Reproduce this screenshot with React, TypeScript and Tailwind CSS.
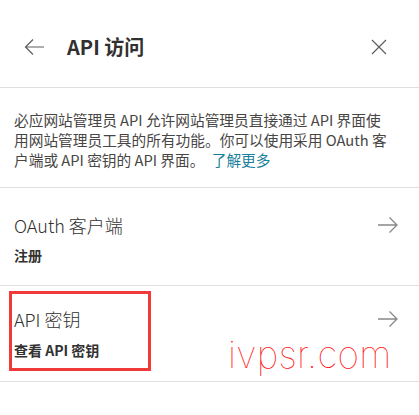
import React from 'react';

const font = { fontFamily: '"Noto Sans CJK SC", "Open Sans", sans-serif' };

function ArrowRight() {
  return (
    <svg width="22" height="20" viewBox="0 0 22 20" fill="none" className="text-[#8a8886]">
      <path d="M1 10H20M12.5 2.5L20 10L12.5 17.5" stroke="currentColor" strokeWidth="1.3" />
    </svg>
  );
}

export default function App() {
  return (
    <div
      className="relative w-[419px] h-[415px] bg-white text-[#323130] overflow-hidden"
      style={{ fontFamily: '"Segoe UI", "Open Sans", "Noto Sans CJK SC", sans-serif' }}
    >
      {/* Header */}
      <div className="h-[88px] flex items-center pt-[6px] pl-[24px] pr-[32px] border-b border-[#e1dfdd]">
        <svg width="21" height="18" viewBox="0 0 21 18" fill="none" className="text-[#605e5c]">
          <path d="M20 9H1.5M9 1.5L1.5 9L9 16.5" stroke="currentColor" strokeWidth="1.2" />
        </svg>
        <h1 className="ml-[22px] text-[20px] font-semibold leading-[26px]" style={font}>
          API 访问
        </h1>
        <svg width="16" height="16" viewBox="0 0 16 16" fill="none" className="ml-auto text-[#605e5c]">
          <path d="M1 1L15 15M15 1L1 15" stroke="currentColor" strokeWidth="1.2" />
        </svg>
      </div>

      {/* Description */}
      <div className="pt-[22px] pb-[17px] pl-[14px] pr-[26px] border-b border-[#e1dfdd]">
        <p className="text-[14.7px] leading-[20px] text-[#484644]" style={font}>
          必应网站管理员 API 允许网站管理员直接通过 API 界面使用网站管理员工具的所有功能。你可以使用采用 OAuth 客户端或 API 密钥的 API 界面。{' '}
          <a className="ml-[4px] text-[#1a7f9c]">了解更多</a>
        </p>
      </div>

      {/* OAuth */}
      <div className="flex items-start pt-[25px] pb-[20px] pl-[14px] pr-[20px] border-b border-[#e1dfdd]">
        <div className="flex flex-col gap-[8px]">
          <span className="text-[18px] leading-[24px] font-light" style={font}>OAuth 客户端</span>
          <span className="text-[14px] leading-[20px] font-bold" style={font}>注册</span>
        </div>
        <div className="ml-auto mt-[2px]">
          <ArrowRight />
        </div>
      </div>

      {/* API key */}
      <div className="relative flex items-start pt-[21px] pb-[21px] pl-[14px] pr-[20px] border-b border-[#e1dfdd]">
        <div className="flex flex-col gap-[9px]">
          <span className="text-[18px] leading-[24px] font-light" style={font}>API 密钥</span>
          <span className="text-[14px] leading-[20px] font-bold" style={font}>查看 API 密钥</span>
        </div>
        <div className="ml-auto mt-[2px]">
          <ArrowRight />
        </div>
        <div className="absolute left-[9px] top-[5px] w-[142px] h-[80px] border-[3px] border-[#f03a3a]" />
        <span
          className="absolute left-[228px] top-[48px] text-[37px] leading-[42px] text-[#ff1010] tracking-[0.3px] font-thin"
          style={{ fontFamily: 'Inter, Roboto, sans-serif' }}
        >
          ivpsr.com
        </span>
      </div>
    </div>
  );
}
